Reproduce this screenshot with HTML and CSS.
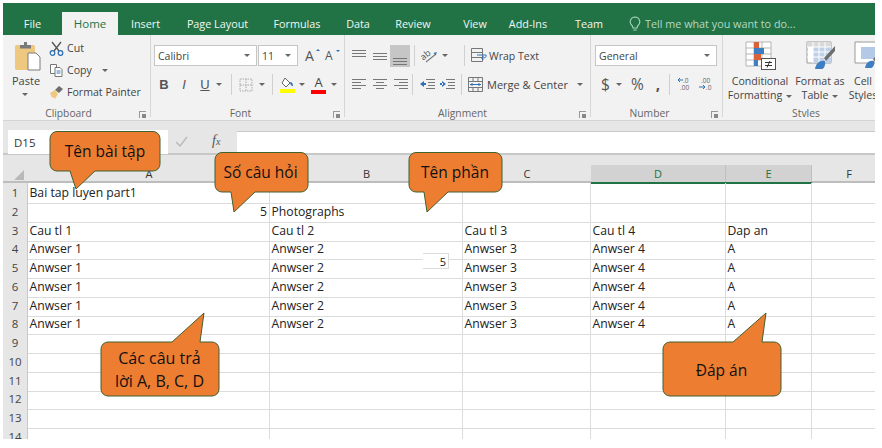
FILE: index.html
```html
<!DOCTYPE html>
<html lang="vi">
<head>
<meta charset="utf-8">
<title>Excel</title>
<link rel="stylesheet" href="styles.css">
</head>
<body>
<div class="app">
  <nav class="tabs">
    <span class="tab t-file">File</span>
    <span class="tab t-home">Home</span>
    <span class="tab t-insert">Insert</span>
    <span class="tab t-layout">Page Layout</span>
    <span class="tab t-formulas">Formulas</span>
    <span class="tab t-data">Data</span>
    <span class="tab t-review">Review</span>
    <span class="tab t-view">View</span>
    <span class="tab t-addins">Add-Ins</span>
    <span class="tab t-team">Team</span>
    <span class="tell">
      <svg width="12" height="16" viewBox="0 0 12 16"><path d="M6 1a4.800 4.800 0 0 0-3 8.500c.6.600.8 1.500 1 2.500h4c.2-1 .4-1.900 1-2.500A4.800 4.800 0 0 0 6 1zM4.300 14h3.400" fill="none" stroke="#a9d3ba" stroke-width="1.100"/></svg>
      Tell me what you want to do...
    </span>
  </nav>

  <section class="ribbon">
    <div class="group g-clip">
      <div class="g-body">
        <div class="paste">
          <svg width="28" height="30" viewBox="0 0 28 30"><rect x="1" y="4" width="20" height="25" rx="1.500" fill="#efc87f"/><path d="M6 4h4V1h3v3h4v3.500H6z" fill="#7a7a7a"/><path d="M14 12h8l4 4v13H14z" fill="#fff" stroke="#7a7a7a"/></svg>
          <span>Paste</span>
          <i class="caret"></i>
        </div>
        <div class="clip-list">
          <div class="clip-item">
            <svg width="15" height="15" viewBox="0 0 15 15"><path d="M3 1l7 9M12 1L5 10" stroke="#555" stroke-width="1.300" fill="none"/><circle cx="3.500" cy="12" r="2.300" fill="none" stroke="#2b6cb0" stroke-width="1.200"/><circle cx="11.500" cy="12" r="2.300" fill="none" stroke="#2b6cb0" stroke-width="1.200"/></svg>
            Cut
          </div>
          <div class="clip-item">
            <svg width="15" height="15" viewBox="0 0 15 15"><path d="M1.500 1.500h6v9h-6z" fill="#fff" stroke="#777"/><path d="M6 4.500h5l2 2v7H6z" fill="#fff" stroke="#777"/><path d="M7.500 8h4M7.500 10h4" stroke="#3d7ab8"/></svg>
            Copy <i class="caret c-copy"></i>
          </div>
          <div class="clip-item">
            <svg width="15" height="15" viewBox="0 0 15 15"><path d="M6 5l4-4 4 3-4 4z" fill="#6e6e6e"/><path d="M1 8l5-3 3 4-3 5-2-2-1 1z" fill="#efc87f"/></svg>
            Format Painter
          </div>
        </div>
      </div>
      <div class="g-label l-clip">Clipboard<i class="launch"></i></div>
    </div>

    <div class="group g-font">
      <div class="g-body col">
        <div class="row r1">
          <div class="combo c-name">Calibri<i class="caret"></i></div>
          <div class="combo c-size">11<i class="caret"></i></div>
          <span class="grow">A<sup class="tri up"></sup></span>
          <span class="grow small">A<sup class="tri down"></sup></span>
        </div>
        <div class="row r2">
          <b class="fmt f-b">B</b>
          <em class="fmt f-i">I</em>
          <u class="fmt f-u">U</u><i class="caret c-u"></i>
          <i class="vsep s-u"></i>
          <svg class="ic-border" width="14" height="14" viewBox="0 0 14 14"><path d="M1 1h12v12H1zM7 1v12M1 7h12" fill="none" stroke="#aaa" stroke-dasharray="1.500 1"/></svg><i class="caret c-b"></i>
          <i class="vsep s-b"></i>
          <svg class="ic-fill" width="15" height="16" viewBox="0 0 15 16"><path d="M5 1l5 5-4 4-4-4z" fill="#fff" stroke="#666"/><path d="M10 5c2 0 3 2 3 4-2 0-3-2-3-4z" fill="#2f6fb5"/><rect y="12" width="15" height="4" fill="#ffff00"/></svg><i class="caret c-f"></i>
          <span class="fontcolor">A</span><i class="caret c-c"></i>
        </div>
      </div>
      <div class="g-label l-font">Font<i class="launch"></i></div>
    </div>

    <div class="group g-align">
      <div class="g-body col">
        <div class="row a1">
          <i class="lines top"></i><i class="lines mid"></i><i class="lines bot active"></i>
          <i class="vsep s-a"></i>
          <svg class="ic-orient" width="16" height="16" viewBox="0 0 16 16"><text x="0" y="11" class="orient" transform="rotate(-40 3 10)">ab</text><path d="M4 14l10-8" stroke="#777" fill="none" stroke-width="1.100"/><path d="M15 4l-3.500 1 2 2.500z" fill="#2f6fb5"/></svg><i class="caret c-or"></i>
          <i class="vsep s-w"></i>
          <svg class="ic-wrap" width="17" height="15" viewBox="0 0 17 15"><path d="M.5.500h11v13H.5zM.5 4.500h11M.5 9.500h11" fill="none" stroke="#777"/><path d="M6 7h9c1 2-1 3-4 3m1.500-2l-2 2 2 2" fill="none" stroke="#2f6fb5"/></svg>
          <span class="al-text t-wrap">Wrap Text</span>
        </div>
        <div class="row a2">
          <i class="lines left"></i><i class="lines center"></i><i class="lines right"></i>
          <i class="vsep s-a"></i>
          <svg class="ic-ind" width="15" height="11" viewBox="0 0 15 11"><path d="M6 .500h9M8 3.500h7M8 6.500h7M6 9.500h9" stroke="#777"/><path d="M0 5l4-3v6zM3 4h3v2H3z" fill="#2f6fb5"/></svg>
          <svg class="ic-ind2" width="15" height="11" viewBox="0 0 15 11"><path d="M6 .500h9M8 3.500h7M8 6.500h7M6 9.500h9" stroke="#777"/><path d="M6 5L2 2v6zM0 4h3v2H0z" fill="#2f6fb5"/></svg>
          <i class="vsep s-w"></i>
          <svg class="ic-merge" width="15" height="15" viewBox="0 0 15 15"><path d="M.5.500h14v14H.5zM.5 4.500h14M.5 10.500h14M5 .500v4M10 .500v4M5 10.500v4M10 10.500v4" fill="none" stroke="#777"/><path d="M2 7.500h11M4 6v3M11 6v3" stroke="#2f6fb5"/></svg>
          <span class="al-text">Merge &amp; Center</span><i class="caret c-m"></i>
        </div>
      </div>
      <div class="g-label l-align">Alignment<i class="launch"></i></div>
    </div>

    <div class="group g-num">
      <div class="g-body col">
        <div class="row n1"><div class="combo c-gen">General<i class="caret"></i></div></div>
        <div class="row n2">
          <span class="numsym s-d">$</span><i class="caret c-d"></i>
          <span class="numsym s-p">%</span>
          <span class="numsym s-c">,</span>
          <i class="vsep s-n"></i>
          <svg class="ic-dec d1" width="14" height="14" viewBox="0 0 14 14"><text x="5" y="6" class="dec">.0</text><text x="2" y="13" class="dec">.00</text><path d="M5 3H0M2 1L0 3l2 2" stroke="#2f6fb5" fill="none"/></svg>
          <svg class="ic-dec d2" width="14" height="14" viewBox="0 0 14 14"><text x="2" y="6" class="dec">.00</text><text x="7" y="13" class="dec">.0</text><path d="M0 10h6M4 8l2 2-2 2" stroke="#2f6fb5" fill="none"/></svg>
        </div>
      </div>
      <div class="g-label l-num">Number<i class="launch"></i></div>
    </div>

    <div class="group g-styles">
      <div class="g-body">
        <div class="style s-cond">
          <svg width="31" height="29" viewBox="0 0 31 29"><path d="M1 1h25v24H1zM9 1v24M17 1v24M1 7h25M1 13h25M1 19h25" fill="#fff" stroke="#a5a5a5" stroke-width=".8"/><rect x="9" y="1" width="5" height="6" fill="#d9623b"/><rect x="9" y="7" width="10" height="6" fill="#3f7fc1"/><rect x="9" y="13" width="7" height="6" fill="#d9623b"/><rect x="9" y="19" width="4" height="6" fill="#3f7fc1"/><rect x="16.500" y="17.500" width="14" height="11" fill="#fff" stroke="#555"/><path d="M20 21.500h7M20 24.500h7M25 20l-3 6.500" stroke="#333" fill="none"/></svg>
          <span>Conditional<br>Formatting<i class="caret in"></i></span>
        </div>
        <div class="style s-tab">
          <svg width="29" height="29" viewBox="0 0 29 29"><path d="M1 1h24v21H1z" fill="#fff" stroke="#9a9a9a"/><path d="M7 6h18v16H7z" fill="#c0d0e6"/><path d="M1 1h24v5H1z" fill="#d9d9d9"/><path d="M1 6h24M1 11h24M1 16h24M7 1v21M13 1v21M19 1v21" stroke="#fff"/><path d="M29 5L18 17l2 3 9-10z" fill="#6e6e6e"/><path d="M9 28c1-6 5-9 10-8 1 3-1 8-3 8z" fill="#3f7fc1"/></svg>
          <span>Format as<br>Table<i class="caret in"></i></span>
        </div>
        <div class="style s-cell">
          <svg width="29" height="29" viewBox="0 0 29 29"><path d="M1 1h24v21H1z" fill="#fff" stroke="#9a9a9a"/><path d="M7 6h14v12H7z" fill="#b4c9e6"/><path d="M28 9l-9 9 2 3 8-9z" fill="#6e6e6e"/><path d="M11 27c1-6 5-8 9-7 1 3-1 7-3 7z" fill="#3f7fc1"/></svg>
          <span>Cell<br>Styles</span>
        </div>
      </div>
      <div class="g-label l-styles">Styles</div>
    </div>
  </section>

  <section class="formula">
    <div class="namebox">D15</div>
    <svg class="ic-check" width="13" height="11" viewBox="0 0 13 11"><path d="M1 6l4 4 7-9" fill="none" stroke="#b9b9b9" stroke-width="1.400"/></svg>
    <em class="fx">f<small>x</small></em>
    <div class="input"></div>
  </section>

  <section class="sheet">
    <div class="hdr">
      <div class="corner"><i></i></div>
      <div class="hc">A</div><div class="hc">B</div><div class="hc">C</div>
      <div class="hc sel">D</div><div class="hc sel">E</div><div class="hc">F</div>
    </div>
    <div class="r"><div class="n">1</div><div class="c">Bai tap luyen part1</div><div class="c"></div><div class="c"></div><div class="c"></div><div class="c"></div><div class="c"></div></div>
    <div class="r"><div class="n">2</div><div class="c num">5</div><div class="c">Photographs</div><div class="c"></div><div class="c"></div><div class="c"></div><div class="c"></div></div>
    <div class="r"><div class="n">3</div><div class="c">Cau tl 1</div><div class="c">Cau tl 2</div><div class="c">Cau tl 3</div><div class="c">Cau tl 4</div><div class="c">Dap an</div><div class="c"></div></div>
    <div class="r"><div class="n">4</div><div class="c">Anwser 1</div><div class="c">Anwser 2</div><div class="c">Anwser 3</div><div class="c">Anwser 4</div><div class="c">A</div><div class="c"></div></div>
    <div class="r"><div class="n">5</div><div class="c">Anwser 1</div><div class="c">Anwser 2<span class="tag">5</span></div><div class="c">Anwser 3</div><div class="c">Anwser 4</div><div class="c">A</div><div class="c"></div></div>
    <div class="r"><div class="n">6</div><div class="c">Anwser 1</div><div class="c">Anwser 2</div><div class="c">Anwser 3</div><div class="c">Anwser 4</div><div class="c">A</div><div class="c"></div></div>
    <div class="r"><div class="n">7</div><div class="c">Anwser 1</div><div class="c">Anwser 2</div><div class="c">Anwser 3</div><div class="c">Anwser 4</div><div class="c">A</div><div class="c"></div></div>
    <div class="r"><div class="n">8</div><div class="c">Anwser 1</div><div class="c">Anwser 2</div><div class="c">Anwser 3</div><div class="c">Anwser 4</div><div class="c">A</div><div class="c"></div></div>
    <div class="r"><div class="n">9</div><div class="c"></div><div class="c"></div><div class="c"></div><div class="c"></div><div class="c"></div><div class="c"></div></div>
    <div class="r"><div class="n">10</div><div class="c"></div><div class="c"></div><div class="c"></div><div class="c"></div><div class="c"></div><div class="c"></div></div>
    <div class="r"><div class="n">11</div><div class="c"></div><div class="c"></div><div class="c"></div><div class="c"></div><div class="c"></div><div class="c"></div></div>
    <div class="r"><div class="n">12</div><div class="c"></div><div class="c"></div><div class="c"></div><div class="c"></div><div class="c"></div><div class="c"></div></div>
    <div class="r"><div class="n">13</div><div class="c"></div><div class="c"></div><div class="c"></div><div class="c"></div><div class="c"></div><div class="c"></div></div>
    <div class="r"><div class="n">14</div><div class="c"></div><div class="c"></div><div class="c"></div><div class="c"></div><div class="c"></div><div class="c"></div></div>
  </section>
</div>

<div class="callout co1"><svg viewBox="0 0 112 68" width="112" height="68"><path class="cs" d="M8 .500H104a7 7 0 0 1 7 7V33a7 7 0 0 1-7 7H46L27 58 21 40H8a7 7 0 0 1-7-7V7.500a7 7 0 0 1 7-7z"/></svg><span>Tên bài tập</span></div>
<div class="callout co2"><svg viewBox="0 0 95 65" width="95" height="65"><path class="cs" d="M8 .500H87a7 7 0 0 1 7 7V33a7 7 0 0 1-7 7H41L20 60 17 40H8a7 7 0 0 1-7-7V7.500a7 7 0 0 1 7-7z"/></svg><span>Số câu hỏi</span></div>
<div class="callout co3"><svg viewBox="0 0 96 65" width="96" height="65"><path class="cs" d="M8 .500H87a7 7 0 0 1 7 7V33a7 7 0 0 1-7 7H40L19 60 16 40H8a7 7 0 0 1-7-7V7.500a7 7 0 0 1 7-7z"/></svg><span>Tên phần</span></div>
<div class="callout co4"><svg viewBox="0 0 122 90" width="122" height="90"><path class="cs" d="M8 30H72L104 1 100 30H112a7 7 0 0 1 7 7V77a7 7 0 0 1-7 7H8a7 7 0 0 1-7-7V37a7 7 0 0 1 7-7z"/></svg><span class="two">Các câu trả<br>lời A, B, C, D</span></div>
<div class="callout co5"><svg viewBox="0 0 122 90" width="122" height="90"><path class="cs" d="M8 30H71L104 1 100 30H112a7 7 0 0 1 7 7V77a7 7 0 0 1-7 7H8a7 7 0 0 1-7-7V37a7 7 0 0 1 7-7z"/></svg><span class="two">Đáp án</span></div>
</body>
</html>
```

FILE: styles.css
```css
* { box-sizing: border-box; }
html, body { margin: 0; padding: 0; background: #fff; }
body { width: 882px; height: 448px; overflow: hidden; position: relative; padding: 3px 7px 9px 3px; font-family: "Open Sans", "Noto Sans", sans-serif; color: #444; }
i { font-style: normal; display: block; }
.app { width: 872px; height: 436px; overflow: hidden; display: flex; flex-direction: column; background: #e6e6e6; }

.tabs { height: 32px; flex: none; background: #217346; display: flex; align-items: flex-end; color: #f1f7f3; font-size: 10.800px; line-height: 23px; }
.tab { height: 23px; text-align: center; flex: none; white-space: nowrap; }
.t-file { width: 59px; font-size: 11px; }
.t-home { width: 56px; background: #f2f2f2; color: #217346; font-size: 11.500px; }
.t-insert { width: 55px; }
.t-layout { width: 89px; }
.t-formulas { width: 70px; }
.t-data { width: 52px; }
.t-review { width: 58px; }
.t-view { width: 66px; }
.t-addins { width: 40px; }
.t-team { width: 40px; margin-left: 21px; }
.tell { margin-left: 20px; display: flex; align-items: center; gap: 4px; height: 23px; color: #b5d8c4; font-size: 10.800px; white-space: nowrap; }

.ribbon { height: 86px; flex: none; background: #f2f2f2; display: flex; border-bottom: 1px solid #d4d4d4; font-size: 11px; }
.group { flex: none; display: flex; flex-direction: column; border-right: 1px solid #d6d6d6; margin-bottom: 3px; }
.g-body { height: 70px; flex: none; display: flex; }
.g-body.col { flex-direction: column; }
.g-label { height: 16px; flex: none; display: flex; align-items: center; justify-content: center; position: relative; font-size: 10.300px; color: #666; }
.l-clip { padding-right: 16px; }
.l-font { padding-right: 17px; }
.l-align { padding-right: 17px; }
.l-num { padding-right: 18px; }
.l-styles { padding-left: 14px; }
.launch { position: absolute; right: 4px; bottom: 3px; width: 7px; height: 7px; border: 1px solid #999; border-width: 1px 0 0 1px; }
.launch::after { content: ""; position: absolute; right: 0; bottom: 0; width: 4px; height: 4px; background: #888; }
.caret { width: 0; height: 0; border: 3px solid transparent; border-top: 3px solid #666; border-bottom: 0; }
.caret.in { display: inline-block; vertical-align: middle; margin-left: 4px; }

.g-clip { width: 148px; }
.paste { width: 44px; padding: 6px 0 0 11px; display: flex; flex-direction: column; align-items: flex-start; }
.paste span { margin: 2px 0 0 -2px; line-height: 15px; font-size: 11px; }
.paste .caret { margin: 5px 0 0 8px; }
.clip-list { display: flex; flex-direction: column; padding: 2px 0 0 2px; }
.clip-item { height: 22px; display: flex; align-items: center; gap: 3px; white-space: nowrap; font-size: 10.600px; }
.c-copy { margin-left: 7px; }

.row { display: flex; align-items: center; flex: none; }
.combo { background: #fff; border: 1px solid #c6c6c6; height: 21px; display: flex; align-items: center; justify-content: space-between; padding: 0 6px 0 3px; font-size: 10.500px; }

.g-font { width: 194px; padding-left: 3px; }
.r1 { height: 21px; margin-top: 10px; }
.c-name { width: 103px; }
.c-size { width: 40px; margin-left: 1px; }
.grow { font-size: 14px; margin-left: 7px; position: relative; width: 15px; color: #555; }
.grow.small { font-size: 12px; margin-left: 5px; }
.tri { position: absolute; right: 0; top: 3px; width: 0; height: 0; border: 2.500px solid transparent; }
.tri.up { border-bottom-color: #2f6fb5; border-top: 0; }
.tri.down { border-top-color: #2f6fb5; border-bottom: 0; }
.r2 { height: 21px; margin-top: 8px; position: relative; }
.fmt { font-size: 13px; color: #555; width: 12px; text-align: center; font-family: "Liberation Sans", sans-serif; }
.f-b { margin-left: 4px; }
.f-i { margin-left: 8px; }
.f-u { margin-left: 9px; }
.c-u { margin-left: 5px; }
.vsep { width: 1px; height: 21px; background: #d0d0d0; flex: none; }
.s-u { margin-left: 9px; }
.ic-border { margin-left: 7px; }
.c-b { margin-left: 6px; }
.s-b { margin-left: 7px; }
.ic-fill { margin-left: 7px; }
.c-f { margin-left: 4px; }
.fontcolor { margin-left: 6px; width: 15px; text-align: center; font-size: 13px; border-bottom: 4px solid #f00; line-height: 15px; }
.c-c { margin-left: 5px; }

.g-align { width: 246px; padding-left: 7px; }
.a1 { height: 23px; margin-top: 9px; }
.a2 { height: 23px; margin-top: 6px; }
.lines { width: 14px; height: 11px; flex: none; }
.lines.top { background: repeating-linear-gradient(#777 0 1px, transparent 1px 3px) 0 0/100% 7px no-repeat; }
.lines.mid { margin-left: 7px; background: repeating-linear-gradient(#777 0 1px, transparent 1px 3px) 0 3px/100% 7px no-repeat; }
.lines.bot { margin-left: 3px; width: 20px; height: 22px; background: repeating-linear-gradient(#777 0 1px, transparent 1px 3px) 3px 13px/14px 7px no-repeat, #c6c6c6; }
.lines.left { background: linear-gradient(#777,#777) 0 0/14px 1px no-repeat, linear-gradient(#777,#777) 0 3px/9px 1px no-repeat, linear-gradient(#777,#777) 0 6px/14px 1px no-repeat, linear-gradient(#777,#777) 0 9px/9px 1px no-repeat; }
.lines.center { margin-left: 7px; background: linear-gradient(#777,#777) 0 0/14px 1px no-repeat, linear-gradient(#777,#777) 3px 3px/8px 1px no-repeat, linear-gradient(#777,#777) 0 6px/14px 1px no-repeat, linear-gradient(#777,#777) 3px 9px/8px 1px no-repeat; }
.lines.right { margin-left: 7px; background: linear-gradient(#777,#777) 0 0/14px 1px no-repeat, linear-gradient(#777,#777) 5px 3px/9px 1px no-repeat, linear-gradient(#777,#777) 0 6px/14px 1px no-repeat, linear-gradient(#777,#777) 5px 9px/9px 1px no-repeat; }
.s-a { margin-left: 4px; }
.ic-orient { margin-left: 7px; overflow: visible; }
.orient { font-size: 9px; fill: #555; }
.c-or { margin-left: 4px; }
.s-w { margin-left: 16px; }
.ic-wrap { margin-left: 6px; }
.al-text { margin-left: 1px; font-size: 11px; white-space: nowrap; }
.t-wrap { font-size: 10.500px; }
.ic-ind { margin-left: 7px; }
.ic-ind2 { margin-left: 5px; }
.a2 .s-w { margin-left: 6px; }
.ic-merge { margin-left: 6px; }
.a2 .al-text { margin-left: 4px; }
.c-m { margin-left: 9px; }

.g-num { width: 132px; padding-left: 4px; }
.n1 { margin-top: 10px; }
.c-gen { width: 122px; }
.n2 { height: 22px; margin-top: 7px; }
.numsym { font-size: 15.500px; color: #555; }
.s-d { margin-left: 6px; }
.c-d { margin-left: 6px; }
.s-p { margin-left: 9px; }
.s-c { margin-left: 12px; font-weight: 700; }
.s-n { margin-left: 9px; }
.ic-dec { flex: none; }
.d1 { margin-left: 8px; }
.d2 { margin-left: 7px; }
.dec { font-size: 6.500px; fill: #666; }

.g-styles { flex: 1; border-right: 0; min-width: 0; overflow: hidden; }
.g-styles .g-body { padding-left: 4px; }
.style { flex: none; display: flex; flex-direction: column; align-items: center; padding-top: 6px; text-align: center; line-height: 14px; font-size: 10.600px; }
.style svg { flex: none; }
.style span { margin-top: 4px; white-space: nowrap; }
.s-cond { width: 66px; }
.s-tab { width: 54px; }
.s-cell { width: 32px; }
.s-cell svg { margin-left: 10px; }

.formula { height: 34px; flex: none; padding-top: 10px; display: flex; align-items: center; position: relative; border-bottom: 2px solid #c8c8c8; }
.namebox { width: 160px; height: 24px; margin-left: 5px; background: #fff; padding-left: 6px; font-size: 11.500px; line-height: 25px; color: #333; }
.ic-check { position: absolute; left: 172px; top: 15px; }
.fx { font-family: "Liberation Serif", serif; font-size: 14px; color: #555; position: absolute; left: 209px; top: 12px; }
.fx small { font-size: 10px; }
.input { position: absolute; left: 234px; right: 0; top: 10px; bottom: 0; background: #fff; border-top: 1px solid #c8c8c8; }

.sheet { flex: 1; min-height: 0; background: #fff; font-size: 12.200px; color: #222; display: flex; flex-direction: column; overflow: hidden; }
.hdr { height: 28px; flex: none; display: grid; grid-template-columns: 25px 242px 193px 128px 135px 86px 74px; background: #e6e6e6; border-bottom: 2px solid #bdbdbd; padding-top: 10px; }
.corner { position: relative; }
.corner i { position: absolute; right: 4px; bottom: 2px; width: 0; height: 0; border-style: solid; border-width: 0 0 10px 10px; border-color: transparent transparent #b9b9b9 transparent; }
.hc { text-align: center; line-height: 17px; font-size: 11px; color: #333; }
.hc.sel { background: #d2d2d2; color: #217346; border-right: 1px solid #c0c0c0; box-shadow: 0 2px 0 #217346; }
.r { height: 18.750px; flex: none; display: grid; grid-template-columns: 25px 242px 193px 128px 135px 86px 74px; }
.n { background: #e6e6e6; border-bottom: 1px solid #c8c8c8; border-right: 1px solid #c8c8c8; text-align: center; line-height: 20px; font-size: 11.500px; color: #444; }
.c { border-right: 1.500px solid #dcdcdc; border-bottom: 1.500px solid #dcdcdc; padding-left: 1.500px; line-height: 19px; position: relative; white-space: nowrap; }
.c.num { text-align: right; padding: 0 2px 0 0; }
.tag { position: absolute; right: 13px; top: -5px; width: 26px; height: 16px; background: #fff; border: 1px solid #dcdcdc; border-width: 1px 1px 1px 0; font-size: 11px; line-height: 15px; text-align: right; padding-right: 2px; }

.callout { position: absolute; color: #111; font-size: 15.500px; }
.callout svg { display: block; }
.cs { fill: #ed7d31; stroke: #41612f; stroke-width: 1; }
.callout span { position: absolute; left: 0; right: 0; text-align: center; white-space: nowrap; }
.co1 { left: 49px; top: 131px; width: 112px; height: 68px; }
.co1 span { top: 9px; }
.co2 { left: 214px; top: 152px; width: 95px; height: 65px; }
.co2 span { top: 9px; left: -2px; }
.co3 { left: 408px; top: 152px; width: 96px; height: 65px; }
.co3 span { top: 9px; left: -2px; }
.co4 { left: 100px; top: 312px; width: 122px; height: 90px; font-size: 16px; }
.co4 span { top: 35px; line-height: 23px; right: 3px; }
.co5 { left: 662px; top: 312px; width: 122px; height: 90px; }
.co5 span { top: 47px; right: 3px; }
```
